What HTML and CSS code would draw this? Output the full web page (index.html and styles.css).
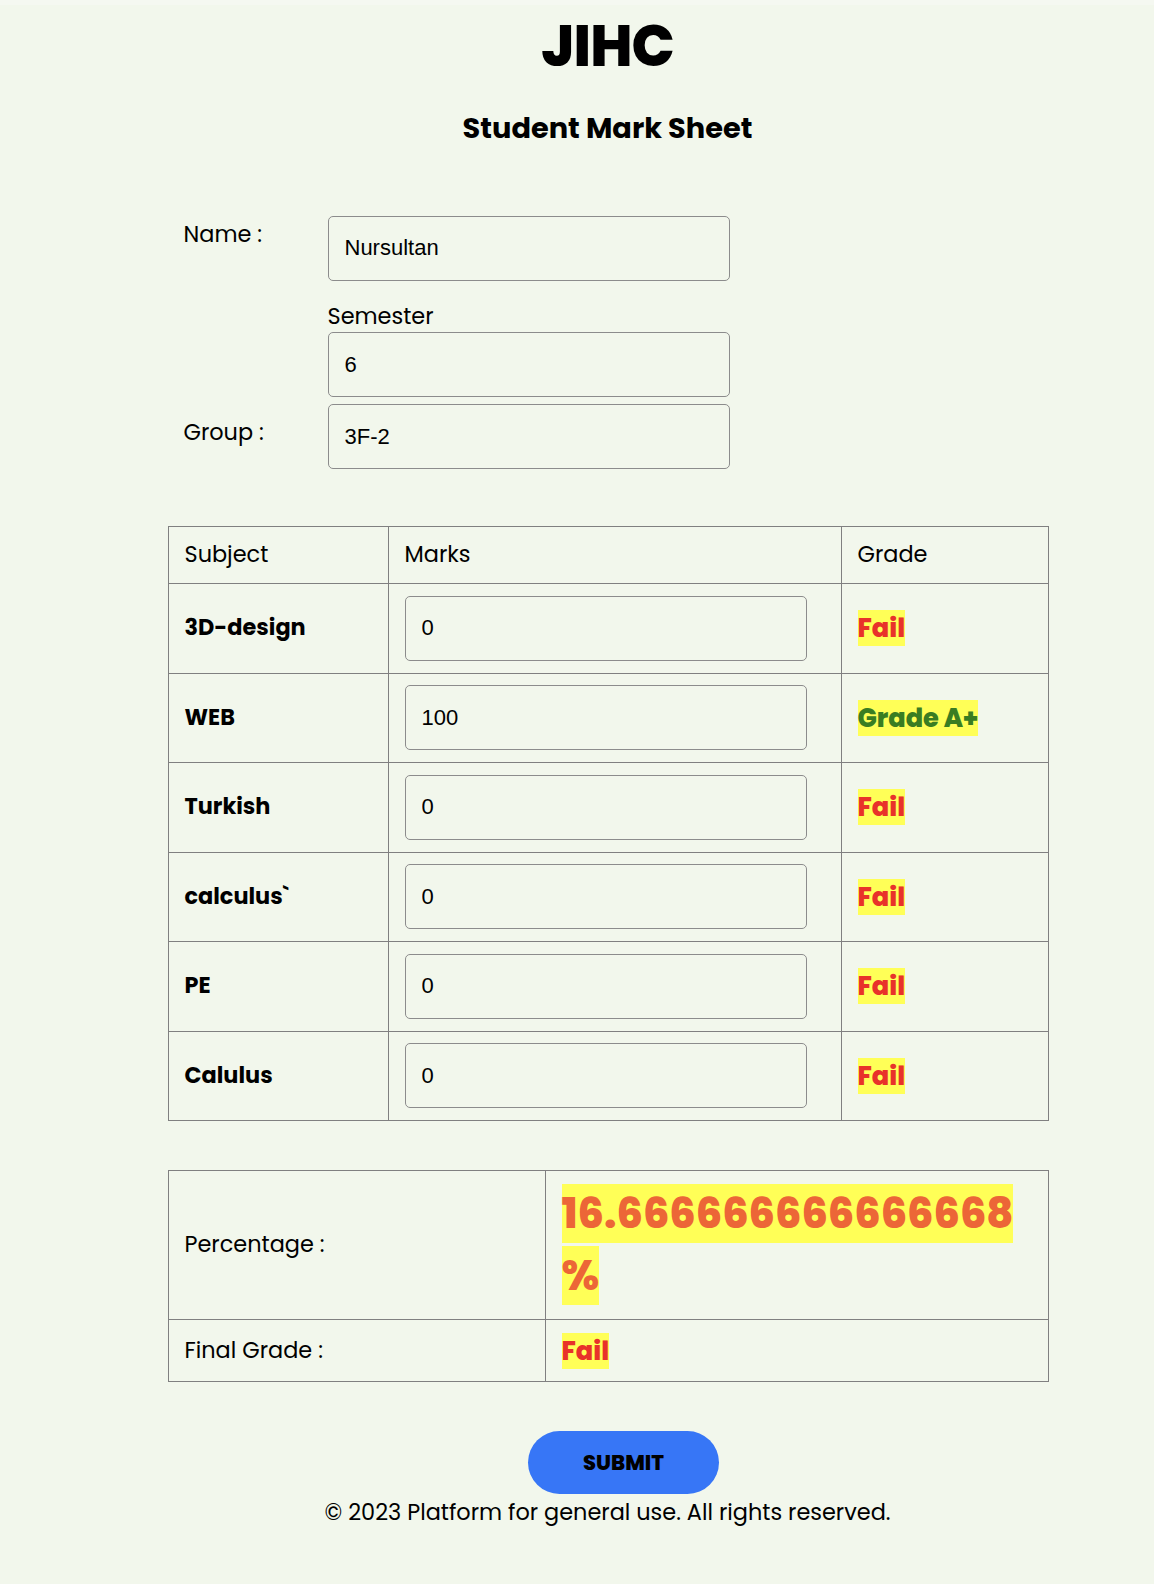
FILE: index.html
```html
<!DOCTYPE html>
<html lang="en">
<head>
<meta charset="utf-8">
<title>JIHC - Student Mark Sheet</title>
<link rel="stylesheet" href="styles.css">
</head>
<body>
<div class="page">
  <header class="head">
    <h1 class="logo">JIHC</h1>
    <h2 class="title">Student Mark Sheet</h2>
  </header>

  <form class="sheet">
    <div class="info">
      <label class="info-label" for="name">Name :</label>
      <div class="info-field"><input class="field" id="name" type="text" value="Nursultan"></div>

      <div class="info-spacer"></div>
      <div class="info-field">
        <label class="sub-label" for="semester">Semester</label>
        <input class="field" id="semester" type="text" value="6">
      </div>

      <label class="info-label info-label-mid" for="group">Group :</label>
      <div class="info-field"><input class="field" id="group" type="text" value="3F-2"></div>
    </div>

    <table class="grid marks">
      <colgroup>
        <col class="c-subject">
        <col class="c-marks">
        <col class="c-grade">
      </colgroup>
      <thead>
        <tr><th>Subject</th><th>Marks</th><th>Grade</th></tr>
      </thead>
      <tbody>
        <tr>
          <td class="subject">3D-design</td>
          <td><input class="field" type="text" value="0"></td>
          <td><span class="badge fail">Fail</span></td>
        </tr>
        <tr>
          <td class="subject">WEB</td>
          <td><input class="field" type="text" value="100"></td>
          <td><span class="badge pass">Grade A+</span></td>
        </tr>
        <tr>
          <td class="subject">Turkish</td>
          <td><input class="field" type="text" value="0"></td>
          <td><span class="badge fail">Fail</span></td>
        </tr>
        <tr>
          <td class="subject">calculus`</td>
          <td><input class="field" type="text" value="0"></td>
          <td><span class="badge fail">Fail</span></td>
        </tr>
        <tr>
          <td class="subject">PE</td>
          <td><input class="field" type="text" value="0"></td>
          <td><span class="badge fail">Fail</span></td>
        </tr>
        <tr>
          <td class="subject">Calulus</td>
          <td><input class="field" type="text" value="0"></td>
          <td><span class="badge fail">Fail</span></td>
        </tr>
      </tbody>
    </table>

    <table class="grid result">
      <colgroup>
        <col class="c-label">
        <col class="c-value">
      </colgroup>
      <tbody>
        <tr>
          <td>Percentage :</td>
          <td class="pct-cell"><span class="pct">16.666666666666668 %</span></td>
        </tr>
        <tr>
          <td>Final Grade :</td>
          <td><span class="badge fail">Fail</span></td>
        </tr>
      </tbody>
    </table>

    <div class="actions">
      <button class="submit" type="button">SUBMIT</button>
    </div>
  </form>

  <footer class="foot">© 2023 Platform for general use. All rights reserved.</footer>
</div>
</body>
</html>
```

FILE: styles.css
```css
html {
  background: #f2f7ec;
}

body {
  margin: 0;
  padding: 0 0 40px 61px;
  border-top: 5px solid #f5f8f1;
  background: #f2f7ec;
  color: #000;
  font-family: Poppins, Inter, "Noto Sans", sans-serif;
  font-size: 22.4px;
  line-height: 1.5;
}

.page {
  width: 880px;
  margin: 0 auto;
}

.head {
  text-align: center;
  padding-top: 7px;
}

.logo {
  margin: 0;
  font-size: 57px;
  font-weight: 800;
  line-height: 1.2;
  letter-spacing: -1px;
}

.title {
  margin: 30px 0 0;
  font-size: 28.8px;
  font-weight: 700;
  line-height: 1.3;
}

.info {
  display: grid;
  grid-template-columns: 144px 402px;
  row-gap: 7px;
  padding-left: 16px;
  margin-top: 68px;
}

.info-label {
  padding-top: 2px;
}

.info-label-mid {
  padding-top: 12px;
}

.sub-label {
  display: block;
  margin-top: 12px;
  margin-bottom: -1px;
}

.field {
  box-sizing: border-box;
  display: block;
  width: 402px;
  height: 65px;
  padding: 0 16px;
  border: 1px solid #8c8c8c;
  border-radius: 5px;
  background: transparent;
  font-family: "Liberation Sans", Arial, sans-serif;
  font-size: 22px;
  color: #000;
}

.grid {
  width: 880px;
  border-collapse: collapse;
  table-layout: fixed;
}

.grid th,
.grid td {
  border: 1px solid #808080;
  text-align: left;
  vertical-align: middle;
  padding: 11.75px 16px;
}

.marks {
  margin-top: 57px;
}

.marks th {
  font-weight: 400;
  padding-top: 11px;
  padding-bottom: 11px;
}

.c-subject { width: 220px; }
.c-marks { width: 453px; }
.c-grade { width: 207px; }

.subject {
  font-size: 22.4px;
  font-weight: 700;
}

.badge {
  display: inline-block;
  font-size: 25.6px;
  font-weight: 800;
  line-height: 36px;
  background: #ffff57;
  vertical-align: middle;
}

.fail { color: #e8322a; }
.pass { color: #3a7d22; }

.result {
  margin-top: 49px;
}

.c-label { width: 377px; }
.c-value { width: 503px; }

.result td {
  padding-top: 12.5px;
  padding-bottom: 12.5px;
}

.grid .pct-cell {
  font-size: 41.6px;
  line-height: 62px;
  padding-top: 12px;
  padding-bottom: 12px;
}

.pct {
  font-weight: 800;
  color: #ec6637;
  background: #ffff57;
}

.actions {
  display: flex;
  justify-content: center;
  margin-top: 49px;
}

.submit {
  width: 191px;
  height: 63px;
  margin-left: 32px;
  border: none;
  border-radius: 32px;
  background: #3776f6;
  color: #000;
  font-family: Poppins, Inter, sans-serif;
  font-size: 21px;
  font-weight: 800;
  cursor: pointer;
}

.foot {
  margin-top: 2px;
  text-align: center;
}
```
